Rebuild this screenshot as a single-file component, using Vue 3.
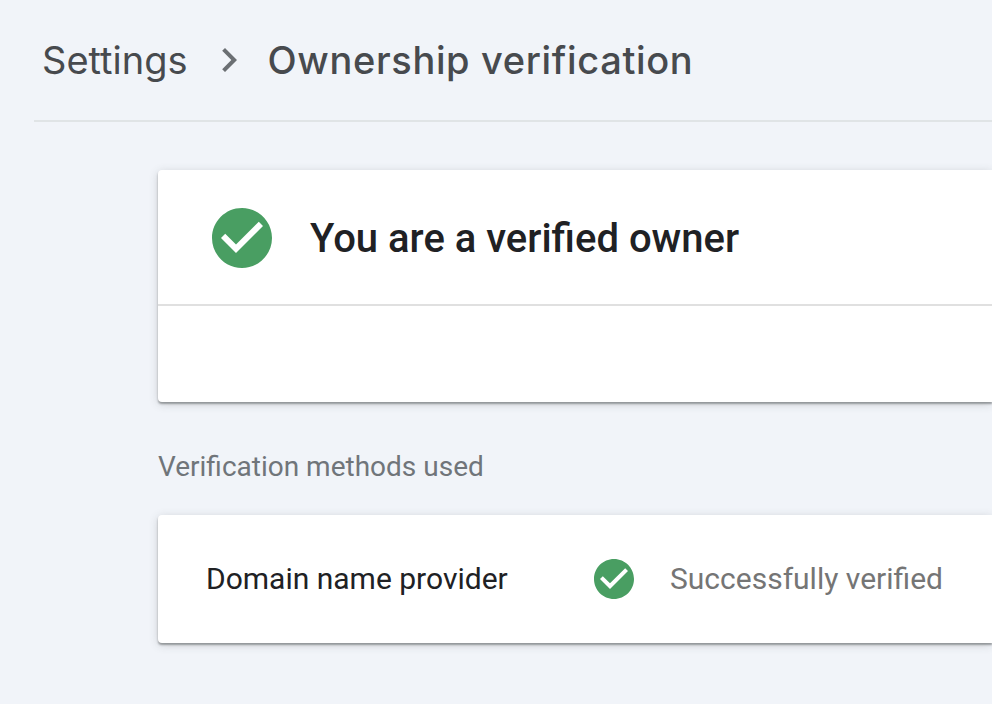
<template>
  <div class="page">
    <header class="crumbs">
      <span class="crumb">Settings</span>
      <svg class="chevron" width="48" height="48" viewBox="0 0 24 24"><path d="M10 6 8.59 7.41 13.17 12l-4.58 4.59L10 18l6-6z" fill="#6b6f73"/></svg>
      <span class="current">Ownership verification</span>
    </header>
    <main class="content">
      <section class="card owner">
        <div class="owner-head">
          <svg width="60" height="60" viewBox="2 2 20 20"><path :d="checkCircle" fill="#499e62"/></svg>
          <h1>You are a verified owner</h1>
        </div>
        <div class="owner-body"></div>
      </section>
      <div class="label">Verification methods used</div>
      <section class="card method">
        <span class="method-name">Domain name provider</span>
        <svg width="40" height="40" viewBox="2 2 20 20"><path :d="checkCircle" fill="#499e62"/></svg>
        <span class="status">Successfully verified</span>
      </section>
    </main>
  </div>
</template>

<script setup>
const checkCircle = 'M12 2C6.48 2 2 6.48 2 12s4.48 10 10 10 10-4.48 10-10S17.52 2 12 2zm-2 15-5-5 1.41-1.41L10 14.17l7.59-7.59L19 8l-9 9z'
</script>

<style>
html, body {
  margin: 0;
  overflow: hidden;
  background: #f1f4f9;
}
</style>

<style scoped>
.page {
  height: 704px;
  padding-left: 34px;
  background: #f1f4f9;
  font-family: Roboto, "Liberation Sans", sans-serif;
  overflow: hidden;
}

.crumbs {
  height: 119px;
  padding: 0 0 1px 8px;
  border-bottom: 2px solid #e0e4e6;
  display: flex;
  align-items: center;
  color: #474a4e;
  font-family: Inter, Roboto, sans-serif;
  font-size: 38px;
}

.chevron {
  margin: 0 15px 0 17px;
}

.current {
  font-weight: 500;
  letter-spacing: 0.65px;
}

.content {
  padding: 48px 0 0 124px;
}

.card {
  background: #fff;
  border-radius: 4px 0 0 4px;
  box-shadow: 0 2px 2px rgba(60, 64, 67, 0.45), 0 2px 10px rgba(60, 64, 67, 0.2);
}

.owner-head {
  height: 132px;
  padding: 2px 0 0 54px;
  border-bottom: 2px solid #e0e0e0;
  display: flex;
  align-items: center;
  gap: 38px;
}

h1 {
  margin: 0;
  font-size: 40px;
  font-weight: 500;
  color: #202124;
}

.owner-body {
  height: 96px;
}

.label {
  margin: 49px 0 32px;
  font-size: 28px;
  line-height: 32px;
  color: #70757a;
}

.method {
  height: 128px;
  display: flex;
  align-items: center;
  padding-left: 48px;
  font-size: 30px;
}

.method-name {
  width: 388px;
  margin-bottom: 2px;
  color: #202124;
}

.status {
  margin: 0 0 2px 36px;
  color: #757575;
}
</style>
